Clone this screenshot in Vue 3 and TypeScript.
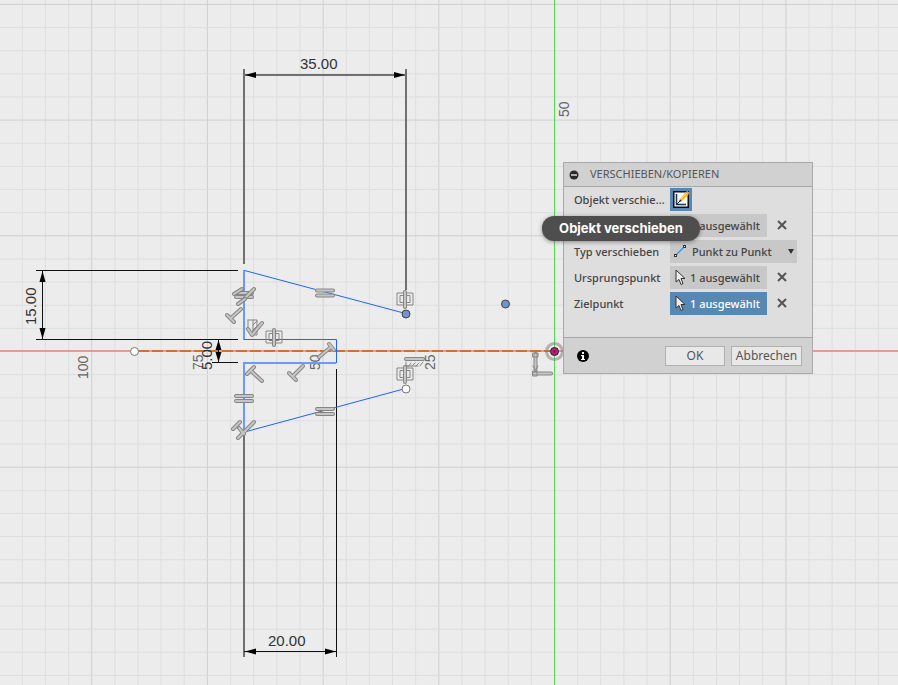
<script setup lang="ts">
import { ref } from 'vue'

const originX = 554
const originY = 351
const majorStep = 115.7

interface GridLine {
  pos: number
  major: boolean
}

function gridLines(origin: number, from: number, to: number): GridLine[] {
  const lines: GridLine[] = []
  for (let i = from; i <= to; i++) {
    if (i === 0) continue
    lines.push({ pos: origin + 0.5 + (i * majorStep) / 5, major: i % 5 === 0 })
  }
  return lines
}

const columns = gridLines(originX, -24, 90)
const rows = gridLines(originY, -16, 70)

const scaleLabels = [
  { text: '100', x: 88, y: 379 },
  { text: '75', x: 203, y: 370 },
  { text: '50', x: 320, y: 370 },
  { text: '25', x: 435, y: 370 },
  { text: '50', x: 569, y: 117 },
]

const dimensionLines = [
  'M244 69V264', 'M406 69V290', 'M244 75H406',
  'M244 433V657',
]
const thinDimensionLines = [
  'M244 651.5H336',
  'M336.5 369V657', 'M36 270.5H238', 'M36 339.5H238', 'M42.5 270V339',
  'M212 362.5H238', 'M218.5 340V362',
]
const arrows = [
  'M245 75l11 -3v6z', 'M405 75l-11 -3v6z',
  'M245 651.5l11 -3v6z', 'M336 651.5l-11 -3v6z',
  'M42.5 271l-3 11h6z', 'M42.5 339l-3 -11h6z',
  'M218.5 340l-3 10h6z', 'M218.5 362l-3 -10h6z',
]

const bars = [
  'M317 290.500H333M317 295.500H333',
  'M317 409H333M317 414H333',
  'M236 396H252M236 401H252',
  'M236 293H252M236 297H252',
  'M234 294L242 289M245 298L254 289',
  'M238 304L245 299M241 309L231 318M227 315L234 322',
  'M329 344L334 350M331 347L319 357',
  'M247 374L254 367M251 371L262 381',
  'M289 373L296 380M293 376L303 366',
  'M233 429L240 422M238 438L254 422M239 428L244 434',
  'M406 359H423',
  'M535.500 354V370M534 373.500H551',
]
const symmetry = [
  { x: 274, y: 337 },
  { x: 405, y: 299 },
  { x: 405, y: 374 },
]

const moveTypes = ['Punkt zu Punkt']
const moveType = ref(moveTypes[0])
const active = ref('ziel')
const open = ref(true)
</script>

<template>
  <main class="workspace">
    <svg class="canvas" role="img" aria-label="Skizze">
      <g class="grid">
        <line v-for="c in columns" :key="'c' + c.pos" :x1="c.pos" :x2="c.pos" y1="0" y2="100%" :class="{ major: c.major }" />
        <line v-for="r in rows" :key="'r' + r.pos" :y1="r.pos" :y2="r.pos" x1="0" x2="100%" :class="{ major: r.major }" />
      </g>
      <line class="axis-x" x1="0" x2="100%" y1="351" y2="351" />
      <line class="axis-y" x1="554.5" x2="554.5" y1="0" y2="100%" />
      <line class="construction" x1="138" x2="550" y1="351" y2="351" />

      <g class="scale">
        <text v-for="l in scaleLabels" :key="l.text + l.x" :transform="`translate(${l.x} ${l.y}) rotate(-90)`">{{ l.text }}</text>
      </g>

      <g class="dimension">
        <path v-for="d in dimensionLines" :key="d" :d="d" class="wide" />
        <path v-for="d in thinDimensionLines" :key="d" :d="d" />
        <path v-for="d in arrows" :key="d" :d="d" class="arrow" />
        <text x="300" y="69">35.00</text>
        <text x="268" y="646">20.00</text>
        <text transform="translate(36 325) rotate(-90)">15.00</text>
        <text transform="translate(212 370) rotate(-90)">5.00</text>
      </g>

      <path class="profile soft" d="M244 270V340M336 363H244V432" />
      <path class="profile" d="M405.500 313.500L244.500 270.500M244 339.500H336.500V363M244.500 432L405.500 388.500" />

      <g class="constraints">
        <g v-for="d in bars" :key="d">
          <path :d="d" class="outer" />
          <path :d="d" class="inner" />
        </g>
        <g v-for="s in symmetry" :key="s.x + '-' + s.y" :transform="`translate(${s.x} ${s.y})`">
          <path class="outer-thin" d="M-2 -6H-8V6H-2M2 -6H8V6H2M-2 -3.500H-5V3.500H-2M2 -3.500H5V3.500H2" />
          <path class="outer" d="M0 -7V8" />
          <path class="inner" d="M0 -7V8" />
        </g>
        <path class="outer-thin" d="M248 320H257V335H253V320M253 325L257 321M253 330L257 326M253 334L257 331M248 320V328" />
        <path class="outer" d="M248 329L252 335L262 323" />
        <path class="inner" d="M248 329L252 335L262 323" />
        <path class="outer-thin" d="M406 362V366H409L411 363M412 366L415 363M416 366L419 363M420 366L423 362M406 366H418" />
        <path class="outer-thin" d="M310 358Q312 354 317 356M533 353H538V357H533ZM533 366L535.500 370L538 366M533 371H537V376H533Z" />
      </g>

      <circle class="origin-halo" cx="554.5" cy="351.500" r="8" />
      <circle class="origin" cx="554.5" cy="351.500" r="4" />
      <circle class="origin-dot" cx="554.5" cy="351.500" r="1" />
      <circle class="point" cx="134.500" cy="351.500" r="4" />
      <circle class="point" cx="406" cy="389" r="4" />
      <circle class="point selected" cx="406" cy="314" r="4" />
      <circle class="point selected" cx="505.500" cy="304" r="4" />
    </svg>

    <section v-if="open" class="dialog" aria-labelledby="dialog-title">
      <header class="title-bar">
        <button class="bare" type="button" aria-label="Einklappen">
          <svg width="10" height="10" viewBox="0 0 10 10"><circle cx="5" cy="5" r="4.500" fill="#2b2b2b" /><path d="M2 5H8" stroke="#ddd" stroke-width="1.500" /></svg>
        </button>
        <h1 id="dialog-title">VERSCHIEBEN/KOPIEREN</h1>
      </header>

      <div class="rows">
        <div class="row">
          <label for="move-object">Objekt verschie...</label>
          <button id="move-object" class="sketch-button" type="button">
            <svg width="18" height="19" viewBox="0 0 18 19">
              <rect x="1" y="1" width="16" height="17" fill="#111" />
              <rect x="2.500" y="2.500" width="13" height="14" fill="#f5f8fc" />
              <path d="M4.500 4V14.500H14" fill="none" stroke="#1c3554" stroke-width="1.500" />
              <path d="M5 14L8 11" stroke="#1c3554" stroke-width="1" />
              <path d="M7 12L8 9L10 11Z" fill="#222" />
              <path d="M8 9L14 2L17 4L10 11Z" fill="#f6b51e" />
              <path d="M9 9L15 3" stroke="#ffe45a" stroke-width="1" />
              <path d="M14 2L15 1L18 3L17 4Z" fill="#e59a8a" />
            </svg>
          </button>
        </div>

        <div class="row">
          <span></span>
          <button class="pick" type="button" aria-label="1 ausgewählt" @click="active = 'auswahl'">
            <svg width="11" height="17" viewBox="0 0 11 17"><path class="cursor" d="M1 1V13L4 10.500L6 15.500L8 14.500L6 9.500H10Z" /></svg>
            1 ausgewählt
          </button>
          <button class="bare clear" type="button" aria-label="Auswahl aufheben">
            <svg width="10" height="10" viewBox="0 0 10 10"><path d="M1 1L9 9M9 1L1 9" /></svg>
          </button>
        </div>

        <div class="row">
          <label for="move-type">Typ verschieben</label>
          <div class="select-wrap">
            <svg class="line-icon" width="14" height="14" viewBox="0 0 14 14">
              <path d="M3 11L11 3" stroke="#2d9bf0" stroke-width="1.500" />
              <rect x="1.500" y="10.500" width="2" height="2" fill="#fff" stroke="#333" />
              <rect x="10.500" y="1.500" width="2" height="2" fill="#fff" stroke="#333" />
            </svg>
            <select id="move-type" v-model="moveType">
              <option v-for="t in moveTypes" :key="t">{{ t }}</option>
            </select>
            <svg class="arrow-icon" width="6" height="5" viewBox="0 0 6 5"><path d="M0 0H6L3 5Z" fill="#333" /></svg>
          </div>
        </div>

        <div class="row">
          <label for="source-point">Ursprungspunkt</label>
          <button id="source-point" class="pick" :class="{ active: active === 'ursprung' }" type="button" @click="active = 'ursprung'">
            <svg width="11" height="17" viewBox="0 0 11 17"><path class="cursor" d="M1 1V13L4 10.500L6 15.500L8 14.500L6 9.500H10Z" /></svg>
            1 ausgewählt
          </button>
          <button class="bare clear" type="button" aria-label="Ursprungspunkt aufheben">
            <svg width="10" height="10" viewBox="0 0 10 10"><path d="M1 1L9 9M9 1L1 9" /></svg>
          </button>
        </div>

        <div class="row">
          <label for="target-point">Zielpunkt</label>
          <button id="target-point" class="pick" :class="{ active: active === 'ziel' }" type="button" @click="active = 'ziel'">
            <svg width="11" height="17" viewBox="0 0 11 17"><path class="cursor" d="M1 1V13L4 10.500L6 15.500L8 14.500L6 9.500H10Z" /></svg>
            1 ausgewählt
          </button>
          <button class="bare clear" type="button" aria-label="Zielpunkt aufheben">
            <svg width="10" height="10" viewBox="0 0 10 10"><path d="M1 1L9 9M9 1L1 9" /></svg>
          </button>
        </div>
      </div>

      <footer class="actions">
        <button class="bare info" type="button" aria-label="Information">
          <svg width="12" height="12" viewBox="0 0 12 12"><circle cx="6" cy="6" r="6" fill="#000" /><path d="M5 2H7V4H5ZM4 5H7V9H8V10H4V9H5V6H4Z" fill="#fff" /></svg>
        </button>
        <button class="action" type="button" @click="open = false">OK</button>
        <button class="action cancel" type="button" @click="open = false">Abbrechen</button>
      </footer>
      <div class="tooltip" role="tooltip">Objekt verschieben</div>
    </section>
  </main>
</template>

<style>
body {
  background: #ececec;
}
</style>

<style scoped>
.workspace {
  position: relative;
  min-height: 100vh;
  overflow: hidden;
  font-family: "Noto Sans", sans-serif;
}
.canvas {
  display: block;
  width: 100%;
  height: 100vh;
  font-family: "Liberation Sans", sans-serif;
}
.grid line {
  stroke: #dedede;
}
.grid .major {
  stroke: #cfcfcf;
}
.axis-x {
  stroke: #e39a9a;
  stroke-width: 2;
}
.axis-y {
  stroke: #55d955;
}
.construction {
  stroke: #d4702f;
  stroke-width: 2;
  stroke-dasharray: 11 3;
}
.scale text {
  font-size: 14px;
  fill: #666;
}
.dimension path {
  stroke: #111;
  fill: none;
}
.dimension .wide {
  stroke: #707070;
  stroke-width: 2;
}
.dimension .arrow {
  fill: #000;
  stroke: none;
}
.dimension text {
  font-size: 15px;
  fill: #333;
}
.profile {
  fill: none;
  stroke: #1f62ff;
}
.profile.soft {
  stroke: #6c98fa;
  stroke-width: 2;
}
.constraints path {
  fill: none;
  stroke-linecap: round;
  stroke-linejoin: round;
}
.constraints .outer {
  stroke: #858585;
  stroke-width: 4;
}
.constraints .inner {
  stroke: #c6c6c6;
  stroke-width: 2;
}
.constraints .outer-thin {
  stroke: #858585;
  stroke-width: 1;
}
.origin-halo {
  fill: none;
  stroke: #777;
  stroke-opacity: 0.5;
  stroke-width: 3;
}
.origin {
  fill: #c2187f;
  stroke: #222;
}
.origin-dot {
  fill: #222;
}
.point {
  fill: #fff;
  stroke: #777;
}
.point.selected {
  fill: #6f94cf;
  stroke: #444;
}
.dialog {
  position: absolute;
  left: 563px;
  top: 162px;
  box-sizing: border-box;
  width: 250px;
  border: 1px solid #a8a8a8;
  background: rgb(221 221 221 / 95%);
  color: #444;
  font-size: 11px;
  font-weight: 500;
}
.title-bar {
  display: flex;
  align-items: center;
  gap: 11px;
  height: 23px;
  padding: 0 5px;
  border-bottom: 1px solid #a8a8a8;
  background: #d1d1d1;
}
h1 {
  margin: 0;
  padding-bottom: 2px;
  font-size: 11px;
  font-weight: 400;
  color: #555;
}
button {
  padding: 0;
  border: 0;
  color: inherit;
  font: inherit;
}
.bare {
  display: flex;
  background: none;
}
.rows {
  display: grid;
  gap: 2px;
  padding: 0 10px 22px;
}
.row {
  display: grid;
  grid-template-columns: 96px 97px auto;
  align-items: center;
  justify-content: start;
  height: 24px;
  white-space: nowrap;
}
.sketch-button {
  display: flex;
  align-items: center;
  justify-content: center;
  width: 22px;
  height: 23px;
  background: #5788b3;
}
.pick {
  display: flex;
  align-items: center;
  gap: 4px;
  height: 23px;
  padding-left: 5px;
  background: #c8c8c8;
}
.pick.active {
  background: #5788b3;
  color: #fff;
}
.cursor {
  fill: #eee;
  stroke: #333;
}
.clear {
  margin-left: 10px;
}
.clear path {
  stroke: #555;
  stroke-width: 2;
}
.select-wrap {
  display: grid;
  grid-column: 2 / 4;
  align-items: center;
  width: 127px;
}
.select-wrap > * {
  grid-area: 1 / 1;
}
.select-wrap svg {
  z-index: 1;
  pointer-events: none;
}
.line-icon {
  margin-left: 3px;
}
.arrow-icon {
  justify-self: end;
  margin-right: 3px;
}
select {
  appearance: none;
  width: 100%;
  height: 23px;
  padding: 0 16px 0 22px;
  border: 0;
  border-radius: 0;
  background: #c8c8c8;
  color: inherit;
  font: inherit;
}
.actions {
  display: flex;
  align-items: center;
  gap: 6px;
  height: 35px;
  padding: 0 10px 0 13px;
  border-top: 1px solid #a8a8a8;
  background: #d1d1d1;
}
.info {
  margin-right: auto;
}
.action {
  box-sizing: border-box;
  width: 60px;
  height: 20px;
  border: 1px solid #b0b0b0;
  background: #e8e8e8;
  color: #555;
  font-size: 12px;
  font-weight: 400;
  line-height: 16px;
}
.cancel {
  width: 71px;
}
.tooltip {
  position: absolute;
  left: -22px;
  top: 53px;
  width: 158px;
  border-radius: 12px;
  background: #4e4e4e;
  color: #fff;
  box-shadow: 0 1px 4px rgb(0 0 0 / 40%);
  font-family: Inter, sans-serif;
  font-size: 13px;
  font-weight: 700;
  line-height: 25px;
  text-align: center;
  white-space: nowrap;
}
</style>
